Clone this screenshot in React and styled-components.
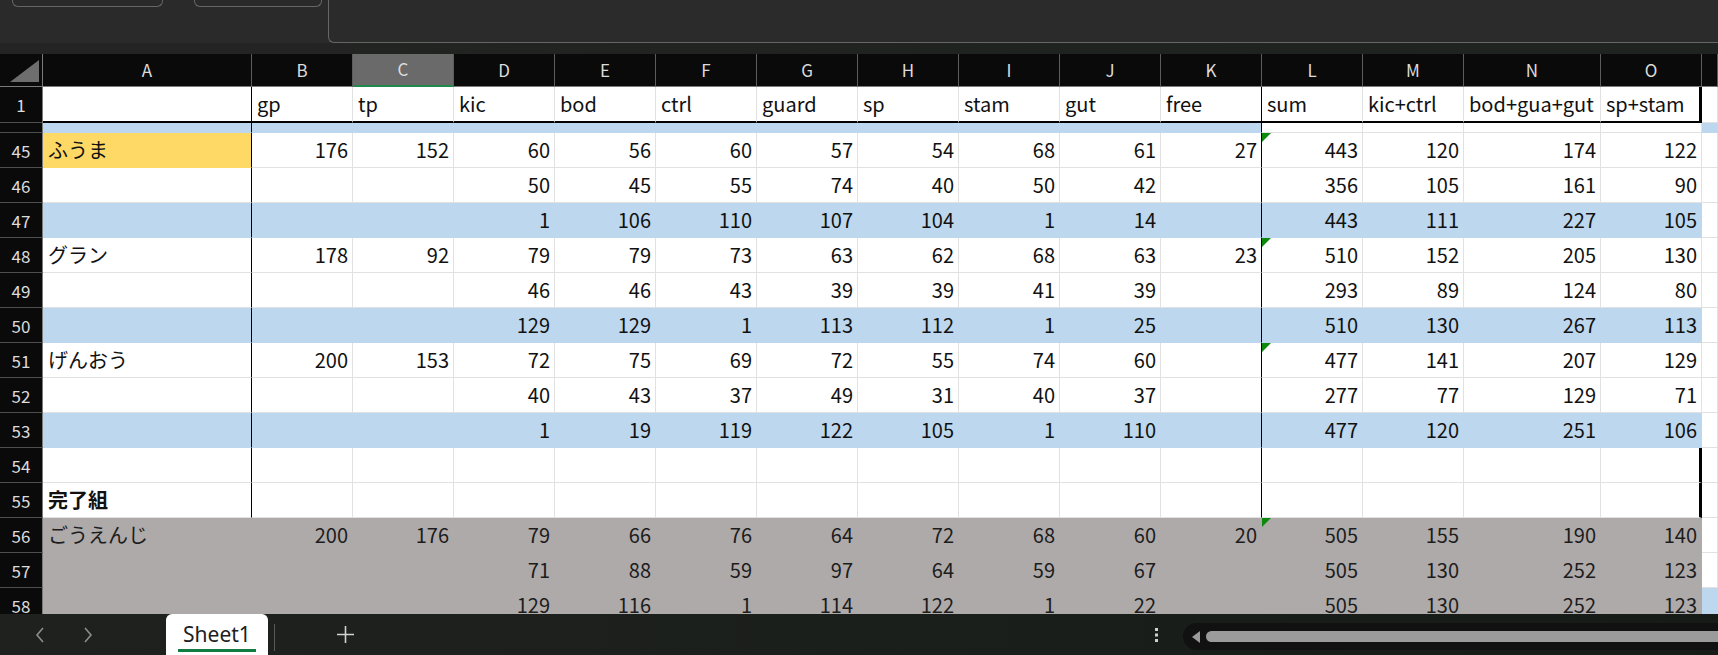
import React from 'react';
import styled, { createGlobalStyle } from 'styled-components';

const FONT = '"Noto Sans CJK JP", "Noto Sans", "Liberation Sans", sans-serif';
const GRID = '#e1e1e1';
const FILL = {
  white: '#ffffff',
  blue: '#bdd7ee',
  yellow: '#ffd966',
  gray: '#aeaaaa',
};
const TEMPLATE = '43px 209px repeat(12, 101px) 137px 101px 1fr';
const LETTERS = ['A', 'B', 'C', 'D', 'E', 'F', 'G', 'H', 'I', 'J', 'K', 'L', 'M', 'N', 'O', 'P'];

const GlobalStyle = createGlobalStyle`
  html, body {
    margin: 0;
    padding: 0;
    background: #2a2a2a;
    overflow: hidden;
    font-family: ${FONT};
  }
`;

const Page = styled.div`
  width: 1718px;
  height: 655px;
  display: flex;
  flex-direction: column;
  overflow: hidden;
`;

const TopBar = styled.div`
  height: 54px;
  flex-shrink: 0;
  display: flex;
  flex-direction: column;
  background: #2a2a2a;
`;

const BoxRow = styled.div`
  height: 43px;
  display: flex;
  align-items: flex-end;
  padding-left: 12px;
  gap: 31px;
`;

const NameBox = styled.div`
  width: ${p => p.$w}px;
  height: 20px;
  margin-bottom: 36px;
  box-sizing: border-box;
  border: 1px solid #666;
  border-top: none;
  border-radius: 0 0 6px 6px;
`;

const FormulaBox = styled.div`
  flex: 1;
  height: 60px;
  margin-left: -25px;
  box-sizing: border-box;
  border: 1px solid #666;
  border-top: none;
  border-right: none;
  border-radius: 0 0 0 6px;
  background: #2b2b2b;
`;

const Strip = styled.div`
  flex: 1;
  background: linear-gradient(90deg, #242424, #1f231f 60%, #202420);
`;

const Sheet = styled.div`
  height: 560px;
  flex-shrink: 0;
  overflow: hidden;
  background: #fff;
`;

const Row = styled.div`
  display: grid;
  grid-template-columns: ${TEMPLATE};
  height: ${p => p.$h}px;
  overflow: hidden;
`;

const Corner = styled.div`
  background: #0a0a0a;
  border-right: 1px solid #7a7a7a;
  border-bottom: 1px solid #7a7a7a;
  box-sizing: border-box;
  display: flex;
  align-items: flex-end;
  justify-content: flex-end;
  padding: 0 3px 4px 0;
`;

const ColHead = styled.div`
  box-sizing: border-box;
  background: ${p => (p.$selected ? '#6a6a6a' : '#0a0a0a')};
  color: #dcdcdc;
  font-size: 17px;
  display: flex;
  align-items: center;
  justify-content: center;
  padding-bottom: 2px;
  border-right: 1px solid #5c5c5c;
  border-bottom: ${p => (p.$selected ? '2px solid #1f8a4c' : '1px solid #7a7a7a')};
`;

const RowHead = styled.div`
  box-sizing: border-box;
  background: #0a0a0a;
  color: #dcdcdc;
  font-size: 17px;
  display: flex;
  align-items: center;
  justify-content: center;
  border-right: 1px solid #7a7a7a;
  border-bottom: 1px solid #4e4e4e;
`;

const edgeStyle = (edge, fill) => {
  if (edge === 'thick') return '3px solid #000';
  if (edge === 'black') return '1px solid #000';
  return `1px solid ${fill === 'white' ? GRID : FILL[fill]}`;
};

const Cell = styled.div`
  position: relative;
  box-sizing: border-box;
  display: flex;
  align-items: center;
  justify-content: ${p => (p.$left ? 'flex-start' : 'flex-end')};
  padding: 0 4px 1px 5px;
  background: ${p => FILL[p.$fill]};
  color: ${p => (p.$fill === 'gray' ? '#1c1c1c' : '#111')};
  font-size: 20px;
  font-weight: ${p => (p.$bold ? 700 : 400)};
  white-space: nowrap;
  overflow: hidden;
  border-right: ${p => edgeStyle(p.$edge, p.$fill)};
  border-bottom: ${p => (p.$under ? '2px solid #000' : `1px solid ${p.$fill === 'white' ? GRID : FILL[p.$fill]}`)};
`;

const Flag = styled.span`
  position: absolute;
  top: 0;
  left: 0;
  width: 0;
  height: 0;
  border-top: 9px solid #0b8a0b;
  border-right: 9px solid transparent;
`;

const BottomBar = styled.div`
  flex: 1;
  display: flex;
  align-items: stretch;
  background: linear-gradient(90deg, #1f211f, #1b1f1b 50%, #161b18);
`;

const NavButtons = styled.div`
  width: 166px;
  display: flex;
  align-items: center;
  padding-left: 35px;
  gap: 38px;
  box-sizing: border-box;
`;

const Tab = styled.div`
  width: 102px;
  background: #fff;
  border-radius: 6px 6px 0 0;
  display: flex;
  flex-direction: column;
  align-items: center;
  justify-content: flex-end;
  color: #202020;
  font-family: "Noto Sans", ${FONT};
  font-size: 21px;
`;

const TabLabel = styled.span`
  padding-bottom: 1px;
  line-height: 28px;
`;

const TabLine = styled.div`
  width: 78px;
  height: 3px;
  background: #107c41;
  margin-bottom: 3px;
`;

const Separator = styled.div`
  width: 1px;
  background: #5a5a5a;
  margin: 10px 0 4px 6px;
`;

const AddButton = styled.div`
  width: 140px;
  display: flex;
  align-items: center;
  justify-content: center;
  color: #d2d2d2;
`;

const Spacer = styled.div`
  flex: 1;
`;

const Dots = styled.div`
  width: 24px;
  display: flex;
  align-items: center;
  justify-content: center;
  margin-right: 14px;
`;

const Scroll = styled.div`
  width: 529px;
  margin: 9px -3px 5px 0;
  background: #111;
  border-radius: 14px 0 0 14px;
  display: flex;
  align-items: center;
  padding-left: 9px;
  gap: 6px;
`;

const Thumb = styled.div`
  flex: 1;
  height: 11px;
  background: #9b9b9b;
  border-radius: 6px 0 0 6px;
`;

const rows = [
  { n: 45, fill: 'white', aFill: 'yellow', flag: true, v: ['ふうま', 176, 152, 60, 56, 60, 57, 54, 68, 61, 27, 443, 120, 174, 122] },
  { n: 46, fill: 'white', v: ['', '', '', 50, 45, 55, 74, 40, 50, 42, '', 356, 105, 161, 90] },
  { n: 47, fill: 'blue', v: ['', '', '', 1, 106, 110, 107, 104, 1, 14, '', 443, 111, 227, 105] },
  { n: 48, fill: 'white', flag: true, v: ['グラン', 178, 92, 79, 79, 73, 63, 62, 68, 63, 23, 510, 152, 205, 130] },
  { n: 49, fill: 'white', v: ['', '', '', 46, 46, 43, 39, 39, 41, 39, '', 293, 89, 124, 80] },
  { n: 50, fill: 'blue', v: ['', '', '', 129, 129, 1, 113, 112, 1, 25, '', 510, 130, 267, 113] },
  { n: 51, fill: 'white', flag: true, v: ['げんおう', 200, 153, 72, 75, 69, 72, 55, 74, 60, '', 477, 141, 207, 129] },
  { n: 52, fill: 'white', v: ['', '', '', 40, 43, 37, 49, 31, 40, 37, '', 277, 77, 129, 71] },
  { n: 53, fill: 'blue', v: ['', '', '', 1, 19, 119, 122, 105, 1, 110, '', 477, 120, 251, 106] },
  { n: 54, fill: 'white', thick: true, v: [] },
  { n: 55, fill: 'white', thick: true, bold: true, v: ['完了組'] },
  { n: 56, fill: 'gray', open: true, flag: true, v: ['ごうえんじ', 200, 176, 79, 66, 76, 64, 72, 68, 60, 20, 505, 155, 190, 140] },
  { n: 57, fill: 'gray', open: true, v: ['', '', '', 71, 88, 59, 97, 64, 59, 67, '', 505, 130, 252, 123] },
  { n: 58, fill: 'gray', open: true, pFill: 'blue', v: ['', '', '', 129, 116, 1, 114, 122, 1, 22, '', 505, 130, 252, 123] },
];

const headers = ['', 'gp', 'tp', 'kic', 'bod', 'ctrl', 'guard', 'sp', 'stam', 'gut', 'free', 'sum', 'kic+ctrl', 'bod+gua+gut', 'sp+stam'];

function edgeFor(i, row) {
  if (row.open) return 'grid';
  if (i === 0 || i === 10) return 'black';
  if (i === 14 && row.thick) return 'thick';
  return 'grid';
}

function DataRow({ row }) {
  return (
    <Row $h={35}>
      <RowHead>{row.n}</RowHead>
      {LETTERS.slice(0, 15).map((l, i) => {
        const fill = i === 0 && row.aFill ? row.aFill : row.fill;
        const val = row.v[i] ?? '';
        return (
          <Cell key={l} $fill={fill} $left={i === 0} $bold={row.bold} $edge={edgeFor(i, row)}>
            {i === 11 && row.flag && <Flag />}
            {val}
          </Cell>
        );
      })}
      <Cell $fill={row.pFill || 'white'} />
    </Row>
  );
}

function CornerMark() {
  return (
    <svg width="29" height="22" viewBox="0 0 29 22">
      <polygon points="0,22 29,22 29,0" fill="#6e6e6e" />
    </svg>
  );
}

function ChevronLeft() {
  return (
    <svg width="10" height="16" viewBox="0 0 10 16">
      <path d="M8 1 L2 8 L8 15" stroke="#8d8d8d" strokeWidth="1.6" fill="none" />
    </svg>
  );
}

function ChevronRight() {
  return (
    <svg width="10" height="16" viewBox="0 0 10 16">
      <path d="M2 1 L8 8 L2 15" stroke="#8d8d8d" strokeWidth="1.6" fill="none" />
    </svg>
  );
}

function Plus() {
  return (
    <svg width="17" height="17" viewBox="0 0 17 17">
      <path d="M8.5 0 V17 M0 8.5 H17" stroke="#d2d2d2" strokeWidth="1.6" />
    </svg>
  );
}

export default function App() {
  return (
    <Page>
      <GlobalStyle />
      <TopBar>
        <BoxRow>
          <NameBox $w={151} />
          <NameBox $w={128} />
          <FormulaBox />
        </BoxRow>
        <Strip />
      </TopBar>

      <Sheet>
        <Row $h={33}>
          <Corner>
            <CornerMark />
          </Corner>
          {LETTERS.slice(0, 15).map(l => (
            <ColHead key={l} $selected={l === 'C'}>{l}</ColHead>
          ))}
          <ColHead />
        </Row>

        <Row $h={36}>
          <RowHead>1</RowHead>
          {headers.map((h, i) => (
            <Cell key={i} $fill="white" $left $under $edge={i === 0 || i === 10 ? 'black' : i === 14 ? 'thick' : 'grid'}>
              {h}
            </Cell>
          ))}
          <Cell $fill="white" />
        </Row>

        <Row $h={10}>
          <RowHead />
          {LETTERS.slice(0, 15).map((l, i) => (
            <Cell key={l} $fill={i <= 10 ? 'blue' : 'white'} $edge={i === 0 || i === 10 ? 'black' : 'grid'} />
          ))}
          <Cell $fill="blue" />
        </Row>

        {rows.map(r => (
          <DataRow key={r.n} row={r} />
        ))}
      </Sheet>

      <BottomBar>
        <NavButtons>
          <ChevronLeft />
          <ChevronRight />
        </NavButtons>
        <Tab>
          <TabLabel>Sheet1</TabLabel>
          <TabLine />
        </Tab>
        <Separator />
        <AddButton>
          <Plus />
        </AddButton>
        <Spacer />
        <Dots>
          <svg width="4" height="14" viewBox="0 0 4 14">
            <rect x="0" y="0" width="3" height="3" fill="#d0d0d0" />
            <rect x="0" y="5.5" width="3" height="3" fill="#d0d0d0" />
            <rect x="0" y="11" width="3" height="3" fill="#d0d0d0" />
          </svg>
        </Dots>
        <Scroll>
          <svg width="8" height="12" viewBox="0 0 8 12">
            <polygon points="8,0 8,12 0,6" fill="#9b9b9b" />
          </svg>
          <Thumb />
        </Scroll>
      </BottomBar>
    </Page>
  );
}
